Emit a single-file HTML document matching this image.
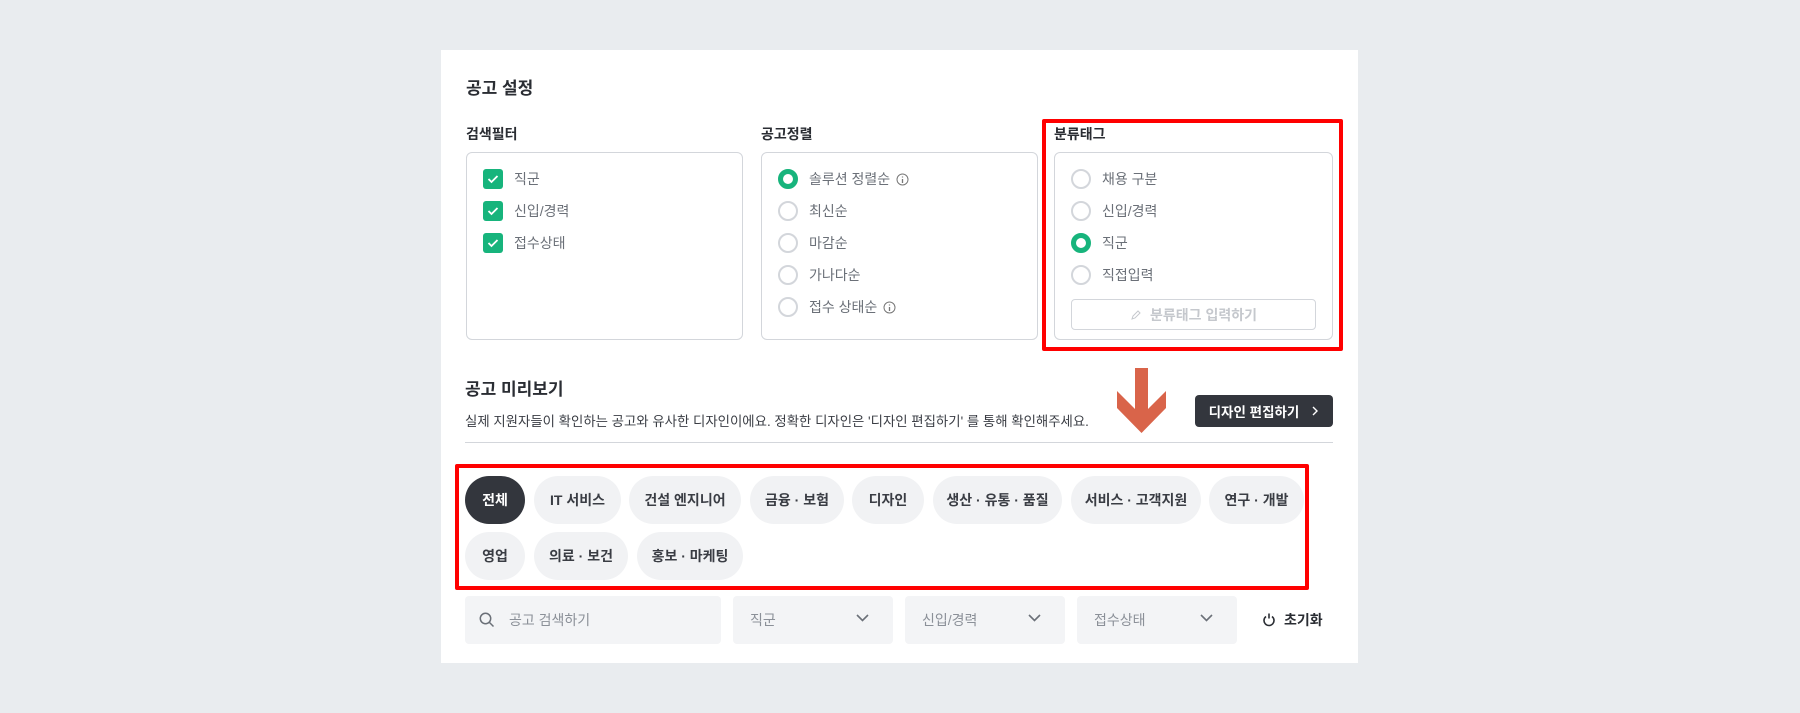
<!DOCTYPE html>
<html><head><meta charset="utf-8"><style>
*{box-sizing:border-box;margin:0;padding:0}
body{width:1800px;height:713px;background:#e9ecef;font-family:"Liberation Sans","Noto Sans CJK KR",sans-serif;position:relative;overflow:hidden;color:#222}
.card{position:absolute;left:441px;top:50px;width:917px;height:613px;background:#fff}
.a{position:absolute}
.h1{font-size:17px;font-weight:700;color:#2a2d33}
.lbl{font-size:14px;font-weight:700;color:#2a2d33}
.box{position:absolute;border:1px solid #d3d6db;border-radius:6px;top:152px;height:188px}
.row{position:absolute;left:0;font-size:14px;color:#6b7078;display:flex;align-items:center;height:20px}
.cb{width:20px;height:20px;background:#17b47c;border-radius:3px;margin-right:11px;display:flex;align-items:center;justify-content:center}
.rd{width:20px;height:20px;border:2px solid #d3d6db;border-radius:50%;margin-right:11px}
.rd.on{border:5px solid #17b47c}
.red{position:absolute;border:4px solid #ff0000;border-radius:2px}
.chip{position:absolute;height:48px;border-radius:24px;background:#f1f2f4;font-size:14px;font-weight:700;color:#3a3d44;display:flex;align-items:center;justify-content:center}
.sel{position:absolute;top:596px;height:48px;background:#f3f4f6;border-radius:4px;font-size:14px;color:#8b9098;display:flex;align-items:center;padding-left:17px}
.sel svg{position:absolute;right:24px;top:18px}
</style></head><body>
<div class="card"></div>
<div class="a h1" style="left:466px;top:74px">공고 설정</div>
<div class="a lbl" style="left:466px;top:124px">검색필터</div>
<div class="a lbl" style="left:761px;top:124px">공고정렬</div>
<div class="a lbl" style="left:1054px;top:124px">분류태그</div>

<div class="box" style="left:466px;width:277px">
 <div class="row" style="left:16px;top:16px"><span class="cb"><svg width="12" height="10"><path d="M1.5 5l3 3 6-6" stroke="#fff" stroke-width="1.8" fill="none"/></svg></span>직군</div>
 <div class="row" style="left:16px;top:48px"><span class="cb"><svg width="12" height="10"><path d="M1.5 5l3 3 6-6" stroke="#fff" stroke-width="1.8" fill="none"/></svg></span>신입/경력</div>
 <div class="row" style="left:16px;top:80px"><span class="cb"><svg width="12" height="10"><path d="M1.5 5l3 3 6-6" stroke="#fff" stroke-width="1.8" fill="none"/></svg></span>접수상태</div>
</div>
<div class="box" style="left:761px;width:277px">
 <div class="row" style="left:16px;top:16px"><span class="rd on"></span>솔루션 정렬순 <svg style="margin-left:6px" width="13" height="13"><circle cx="6.5" cy="6.5" r="5.5" stroke="#777" fill="none"/><path d="M6.5 6v4M6.5 3.5v1" stroke="#777" stroke-width="1.3"/></svg></div>
 <div class="row" style="left:16px;top:48px"><span class="rd"></span>최신순</div>
 <div class="row" style="left:16px;top:80px"><span class="rd"></span>마감순</div>
 <div class="row" style="left:16px;top:112px"><span class="rd"></span>가나다순</div>
 <div class="row" style="left:16px;top:144px"><span class="rd"></span>접수 상태순 <svg style="margin-left:6px" width="13" height="13"><circle cx="6.5" cy="6.5" r="5.5" stroke="#777" fill="none"/><path d="M6.5 6v4M6.5 3.5v1" stroke="#777" stroke-width="1.3"/></svg></div>
</div>
<div class="box" style="left:1054px;width:279px">
 <div class="row" style="left:16px;top:16px"><span class="rd"></span>채용 구분</div>
 <div class="row" style="left:16px;top:48px"><span class="rd"></span>신입/경력</div>
 <div class="row" style="left:16px;top:80px"><span class="rd on"></span>직군</div>
 <div class="row" style="left:16px;top:112px"><span class="rd"></span>직접입력</div>
 <div class="a" style="left:16px;top:146px;width:245px;height:31px;border:1px solid #d3d6db;border-radius:4px;display:flex;align-items:center;justify-content:center;font-size:14px;font-weight:700;color:#c5c8cd"><svg width="12" height="12" style="margin-right:8px"><path d="M2 10l1-3 5-5 2 2-5 5z" stroke="#c5c8cd" fill="none"/></svg>분류태그 입력하기</div>
</div>
<div class="red" style="left:1042px;top:119px;width:301px;height:232px"></div>

<svg class="a" style="left:1117px;top:368px" width="50" height="66"><path d="M18 0H31V41L49 23V40L24.5 65L0 40V23L18 41Z" fill="#d9644a"/></svg>

<div class="a h1" style="left:465px;top:375px">공고 미리보기</div>
<div class="a" style="left:465px;top:410px;font-size:13.4px;color:#3a3d44">실제 지원자들이 확인하는 공고와 유사한 디자인이에요. 정확한 디자인은 '디자인 편집하기' 를 통해 확인해주세요.</div>
<div class="a" style="left:1195px;top:395px;width:138px;height:32px;background:#33363d;border-radius:4px;color:#fff;font-size:13.5px;font-weight:700;display:flex;align-items:center;justify-content:center">디자인 편집하기<svg width="8" height="10" style="margin-left:12px"><path d="M2 1l4 4-4 4" stroke="#fff" stroke-width="1.4" fill="none"/></svg></div>
<div class="a" style="left:465px;top:442px;width:868px;height:1px;background:#d3d6db"></div>

<div class="chip" style="left:465px;top:476px;width:60px;background:#33363d;color:#fff">전체</div>
<div class="chip" style="left:534px;top:476px;width:87px">IT 서비스</div>
<div class="chip" style="left:629px;top:476px;width:112px">건설 엔지니어</div>
<div class="chip" style="left:750px;top:476px;width:94px">금융 · 보험</div>
<div class="chip" style="left:852px;top:476px;width:72px">디자인</div>
<div class="chip" style="left:933px;top:476px;width:129px">생산 · 유통 · 품질</div>
<div class="chip" style="left:1071px;top:476px;width:130px">서비스 · 고객지원</div>
<div class="chip" style="left:1209px;top:476px;width:95px">연구 · 개발</div>
<div class="chip" style="left:465px;top:532px;width:60px">영업</div>
<div class="chip" style="left:534px;top:532px;width:94px">의료 · 보건</div>
<div class="chip" style="left:637px;top:532px;width:106px">홍보 · 마케팅</div>
<div class="red" style="left:455px;top:464px;width:854px;height:126px"></div>

<div class="sel" style="left:465px;width:256px;padding-left:14px"><svg style="position:static;margin-right:14px" width="16" height="16"><circle cx="6.5" cy="6.5" r="5.2" stroke="#6b7078" stroke-width="1.5" fill="none"/><path d="M10.5 10.5l4 4" stroke="#6b7078" stroke-width="1.5"/></svg>공고 검색하기</div>
<div class="sel" style="left:733px;width:160px">직군<svg width="13" height="8"><path d="M1 1l5.5 5.5L12 1" stroke="#6b7078" stroke-width="1.6" fill="none"/></svg></div>
<div class="sel" style="left:905px;width:160px">신입/경력<svg width="13" height="8"><path d="M1 1l5.5 5.5L12 1" stroke="#6b7078" stroke-width="1.6" fill="none"/></svg></div>
<div class="sel" style="left:1077px;width:160px">접수상태<svg width="13" height="8"><path d="M1 1l5.5 5.5L12 1" stroke="#6b7078" stroke-width="1.6" fill="none"/></svg></div>
<div class="a" style="left:1262px;top:610px;display:flex;align-items:center;font-size:14px;font-weight:700;color:#2a2d33"><svg width="14" height="15" style="margin-right:8px"><path d="M4 3.5A5 5 0 1 0 10 3.5" stroke="#2a2d33" stroke-width="1.6" fill="none"/><path d="M7 0.5v5" stroke="#2a2d33" stroke-width="1.6"/></svg>초기화</div>
</body></html>
